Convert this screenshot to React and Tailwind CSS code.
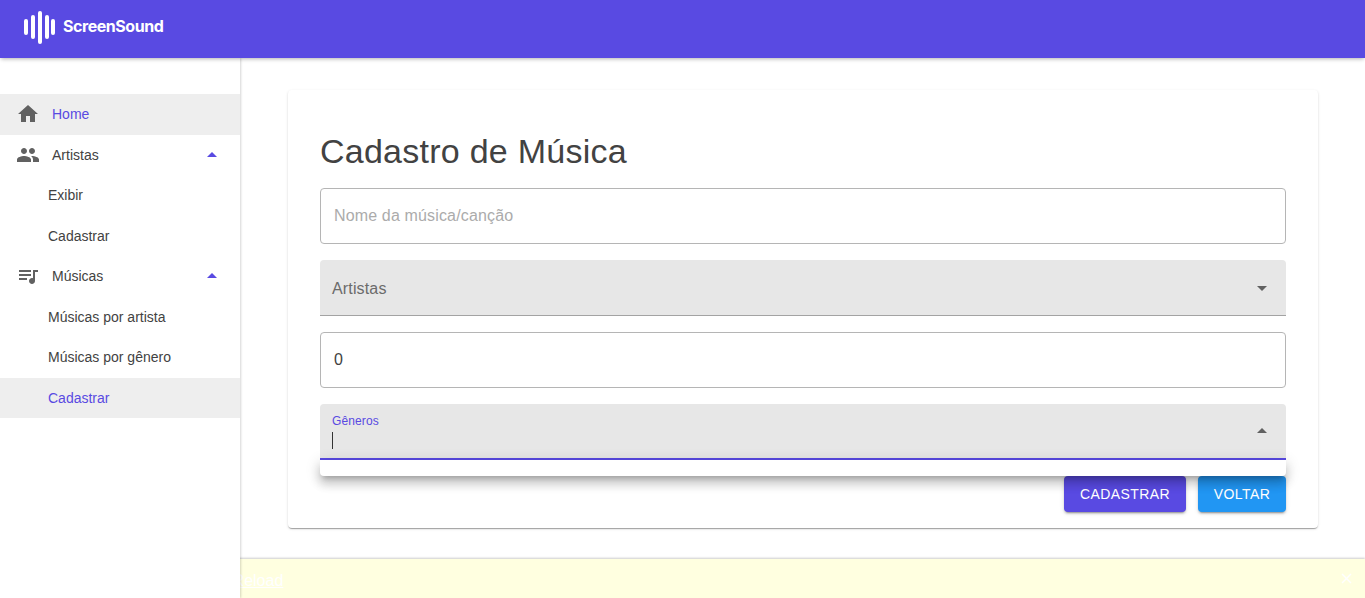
const Icon = ({ d, className = "" }) => (
  <svg viewBox="0 0 24 24" className={className} fill="currentColor" aria-hidden="true">
    <path d={d} />
  </svg>
);

const HOME = "M10 20v-6h4v6h5v-8h3L12 3 2 12h3v8z";
const PEOPLE = "M16 11c1.66 0 2.99-1.34 2.99-3S17.66 5 16 5c-1.66 0-3 1.34-3 3s1.34 3 3 3zm-8 0c1.66 0 2.99-1.34 2.99-3S9.66 5 8 5C6.34 5 5 6.34 5 8s1.34 3 3 3zm0 2c-2.33 0-7 1.17-7 3.5V19h14v-2.5c0-2.33-4.67-3.5-7-3.5zm8 0c-.29 0-.62.02-.97.05 1.16.84 1.97 1.97 1.97 3.45V19h6v-2.5c0-2.33-4.67-3.5-7-3.5z";
const QUEUE = "M15 6H3v2h12V6zm0 4H3v2h12v-2zM3 16h8v-2H3v2zM17 6v8.18c-.31-.11-.65-.18-1-.18-1.66 0-3 1.34-3 3s1.34 3 3 3 3-1.34 3-3V8h3V6h-5z";
const UP = "M7 14l5-5 5 5z";
const DOWN = "M7 10l5 5 5-5z";
const CLOSE = "M19 6.41 17.59 5 12 10.59 6.41 5 5 6.41 10.59 12 5 17.59 6.41 19 12 13.41 17.59 19 19 17.59 13.41 12z";

const Logo = () => (
  <svg viewBox="0 0 32 34" className="w-8 h-[34px] mb-[2px]" fill="#fff" aria-hidden="true">
    <rect x="0" y="8" width="4" height="16" rx="2" />
    <rect x="7" y="4" width="4" height="24" rx="2" />
    <rect x="14" y="0" width="4" height="33" rx="2" />
    <rect x="21" y="4" width="4" height="24" rx="2" />
    <rect x="27" y="8" width="4" height="16" rx="2" />
  </svg>
);

const NavGroup = ({ icon, label }) => (
  <div className="h-[40.5px] flex items-center pl-4 pr-[16px] text-[#424242]">
    <Icon d={icon} className="w-6 h-6 text-[#616161] shrink-0" />
    <span className="ml-3 flex-1">{label}</span>
    <Icon d={UP} className="w-6 h-6 text-[#594ae2] shrink-0" />
  </div>
);

const NavSub = ({ label, active }) => (
  <div className={"h-[40.5px] flex items-center pl-12 " + (active ? "bg-[#eeeeee] text-[#594ae2]" : "text-[#424242]")}>
    {label}
  </div>
);

export default function App() {
  return (
    <div className="relative h-[598px] w-full overflow-hidden bg-white flex flex-col font-['Liberation_Sans',Arial,sans-serif] text-sm text-[#424242]">
      <header className="relative z-20 h-[58px] shrink-0 bg-[#594ae2] flex items-center pl-6 shadow-[0_2px_4px_-1px_rgba(0,0,0,0.3)]">
        <Logo />
        <span className="ml-[7px] text-white text-[16px] font-bold font-['Inter',sans-serif] tracking-[-0.45px] mb-[5px]">ScreenSound</span>
      </header>
      <div className="flex flex-1 min-h-0">
        <aside className="relative z-10 w-[240px] shrink-0 bg-white pt-9 shadow-[1px_0_2px_rgba(0,0,0,0.16)]">
          <div className="h-[40.5px] flex items-center pl-4 bg-[#eeeeee] text-[#594ae2]">
            <Icon d={HOME} className="w-6 h-6 text-[#616161] shrink-0" />
            <span className="ml-3">Home</span>
          </div>
          <NavGroup icon={PEOPLE} label="Artistas" />
          <NavSub label="Exibir" />
          <NavSub label="Cadastrar" />
          <NavGroup icon={QUEUE} label="Músicas" />
          <NavSub label="Músicas por artista" />
          <NavSub label="Músicas por gênero" />
          <NavSub label="Cadastrar" active />
        </aside>
        <main className="flex-1 pl-[48px] pr-[47px] pt-8">
          <section className="relative h-[438px] bg-white rounded px-8 pt-[37px] shadow-[0_2px_1px_-1px_rgba(0,0,0,0.2),0_1px_1px_0_rgba(0,0,0,0.14),0_1px_3px_0_rgba(0,0,0,0.12)]">
            <h1 className="text-[34px] leading-[48px] tracking-[0.25px] text-[#424242] mb-[13px]">Cadastro de Música</h1>
            <div className="flex flex-col gap-4">
              <div className="h-14 rounded border border-[#b5b5b5] flex items-center px-[13px]">
                <input readOnly placeholder="Nome da música/canção" className="w-full outline-none bg-transparent text-base tracking-[0.15px] placeholder:text-[#ababab]" />
              </div>
              <div className="h-14 rounded-t bg-[#e7e7e7] border-b border-[#a3a3a3] flex items-center pl-3 pr-3 text-base tracking-[0.15px] text-[#6b6b6b]">
                <span className="flex-1 pt-[2px]">Artistas</span>
                <Icon d={DOWN} className="w-6 h-6 text-[#616161]" />
              </div>
              <div className="h-14 rounded border border-[#b5b5b5] flex items-center px-[13px] text-base text-[#424242]">0</div>
              <div className="relative h-14 rounded-t bg-[#e7e7e7] border-b-2 border-[#594ae2] flex items-center pl-3 pr-3">
                <div className="flex-1 flex flex-col items-start">
                  <span className="text-xs leading-[14px] tracking-[0.11px] text-[#594ae2] mb-[4px]">Gêneros</span>
                  <span className="w-px h-[17px] bg-[#333333]" />
                </div>
                <Icon d={UP} className="w-6 h-6 text-[#616161]" />
                <div className="absolute z-10 left-0 right-0 top-14 h-4 bg-white rounded-b shadow-[0_5px_5px_-3px_rgba(0,0,0,0.2),0_8px_10px_1px_rgba(0,0,0,0.14),0_3px_14px_2px_rgba(0,0,0,0.12)]" />
              </div>
              <div className="flex justify-end gap-3">
                <button className="w-[122px] h-9 rounded bg-[#594ae2] text-white text-sm tracking-[0.4px] shadow-[0_3px_1px_-2px_rgba(0,0,0,0.2),0_2px_2px_0_rgba(0,0,0,0.14),0_1px_5px_0_rgba(0,0,0,0.12)]">CADASTRAR</button>
                <button className="w-[88px] h-9 rounded bg-[#2196f3] text-white text-sm tracking-[0.4px] shadow-[0_3px_1px_-2px_rgba(0,0,0,0.2),0_2px_2px_0_rgba(0,0,0,0.14),0_1px_5px_0_rgba(0,0,0,0.12)]">VOLTAR</button>
              </div>
            </div>
          </section>
        </main>
      </div>
      <div className="absolute bottom-0 left-0 right-0 h-[39px] bg-[#ffffe0] pt-[13px] text-base leading-[18px] text-white shadow-[0_-1px_2px_rgba(0,0,0,0.2)]">
        <span className="tracking-[-0.31px]">An unhandled error has occurred. </span><a className="underline">Reload</a>
        <Icon d={CLOSE} className="absolute right-[10px] top-[11px] w-[17px] h-[17px] text-white" />
      </div>
    </div>
  );
}
